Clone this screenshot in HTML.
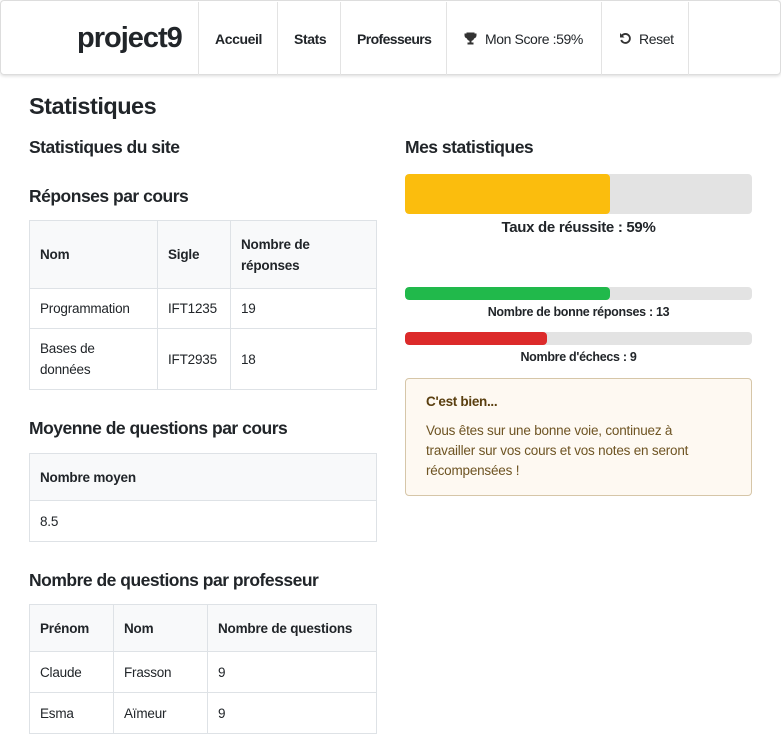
<!DOCTYPE html><html><head><meta charset="utf-8"><style>
*{box-sizing:border-box;margin:0;padding:0}
body{width:781px;height:721px;overflow:hidden;background:#fff;font-family:"Liberation Sans",sans-serif;color:#212529;position:relative}
.a{position:absolute;white-space:nowrap}
nav{position:absolute;left:0;top:0;width:781px;height:75px;border:1px solid #ddd;border-radius:4px;box-shadow:0 1px 3px rgba(0,0,0,.15)}
.sep{position:absolute;top:1px;height:73px;width:1px;background:#e3e3e3}
.nl{position:absolute;top:30px;font-size:14px;letter-spacing:-.4px}
table{position:absolute;border-collapse:collapse;font-size:13.5px;letter-spacing:-.2px}
td,th{border:1px solid #dee2e6;padding:0 10px;text-align:left;vertical-align:middle}
th{background:#f8f9fa;font-weight:bold}
h{position:absolute;font-weight:bold;white-space:nowrap;letter-spacing:-.5px}
.bar{position:absolute;left:405px;width:347px;background:#e3e3e3;border-radius:4px;overflow:hidden}
.bar div{height:100%;border-radius:4px}
.c{position:absolute;left:405px;width:347px;text-align:center;font-weight:bold;letter-spacing:-.3px}
</style></head><body>
<nav>
<div class="a" style="left:76px;top:21px;font-size:29px;font-weight:bold;letter-spacing:-1px">project9</div>
<div class="sep" style="left:197px"></div><div class="sep" style="left:276px"></div><div class="sep" style="left:339px"></div><div class="sep" style="left:445px"></div><div class="sep" style="left:600px"></div><div class="sep" style="left:687px"></div>
<div class="nl" style="left:214px;font-weight:bold">Accueil</div>
<div class="nl" style="left:293px;font-weight:bold">Stats</div>
<div class="nl" style="left:356px;font-weight:bold;letter-spacing:-.6px">Professeurs</div>
<svg class="a" style="left:463px;top:31px" width="13" height="13" viewBox="0 0 13 13"><path d="M3 1h7v4a3.5 3.5 0 0 1-7 0z M3 2H1v1.5a2.5 2.5 0 0 0 2.5 2.5 M10 2h2v1.5a2.5 2.5 0 0 1-2.5 2.5" fill="#333" stroke="#333" stroke-width="1"/><rect x="5.5" y="8" width="2" height="2.5" fill="#333"/><rect x="3.5" y="10.5" width="6" height="2" fill="#333"/></svg>
<div class="nl" style="left:484px">Mon Score :59%</div>
<svg class="a" style="left:618px;top:31px" width="13" height="13" viewBox="0 0 13 13"><path d="M3 3.5A4.5 4.5 0 1 1 2.2 8" fill="none" stroke="#333" stroke-width="1.8"/><path d="M1 1v4.5h4.5z" fill="#333"/></svg>
<div class="nl" style="left:638px">Reset</div>
</nav>
<h style="left:29px;top:93px;font-size:23.5px">Statistiques</h>
<h style="left:29px;top:137px;font-size:17.5px">Statistiques du site</h>
<h style="left:29px;top:186px;font-size:17.5px">Réponses par cours</h>
<table style="left:29px;top:220px;width:348px">
<tr style="height:68px"><th style="width:128px">Nom</th><th style="width:73px">Sigle</th><th style="line-height:21px">Nombre de<br>réponses</th></tr>
<tr style="height:40px"><td>Programmation</td><td>IFT1235</td><td>19</td></tr>
<tr style="height:61px"><td style="line-height:21px">Bases de<br>données</td><td>IFT2935</td><td>18</td></tr>
</table>
<h style="left:29px;top:418px;font-size:17.5px">Moyenne de questions par cours</h>
<table style="left:29px;top:453px;width:348px">
<tr style="height:47px"><th>Nombre moyen</th></tr>
<tr style="height:41px"><td>8.5</td></tr>
</table>
<h style="left:29px;top:570px;font-size:17.5px">Nombre de questions par professeur</h>
<table style="left:29px;top:604px;width:348px">
<tr style="height:47px"><th style="width:84px">Prénom</th><th style="width:94px">Nom</th><th>Nombre de questions</th></tr>
<tr style="height:41px"><td>Claude</td><td>Frasson</td><td>9</td></tr>
<tr style="height:41px"><td>Esma</td><td>Aïmeur</td><td>9</td></tr>
</table>
<h style="left:405px;top:137px;font-size:17.5px">Mes statistiques</h>
<div class="bar" style="top:174px;height:40px"><div style="width:205px;background:#fbbd0d"></div></div>
<div class="c" style="top:219px;font-size:15px">Taux de réussite : 59%</div>
<div class="bar" style="top:287px;height:13px"><div style="width:205px;background:#21b94b"></div></div>
<div class="c" style="top:305px;font-size:12.5px">Nombre de bonne réponses : 13</div>
<div class="bar" style="top:332px;height:13px"><div style="width:142px;background:#dc2a2a"></div></div>
<div class="c" style="top:350px;font-size:12.5px">Nombre d'échecs : 9</div>
<div class="a" style="left:405px;top:378px;width:347px;height:118px;background:#fef9f2;border:1px solid #d6c6a8;border-radius:4px;white-space:normal;color:#6e5423;padding:15px 30px 14px 20px;font-size:13.5px">
<div style="font-weight:bold;color:#5a3f10;letter-spacing:-.3px">C'est bien...</div>
<div style="margin-top:12px;line-height:20px;letter-spacing:-.2px">Vous êtes sur une bonne voie, continuez à travailler sur vos cours et vos notes en seront récompensées !</div>
</div>
</body></html>
